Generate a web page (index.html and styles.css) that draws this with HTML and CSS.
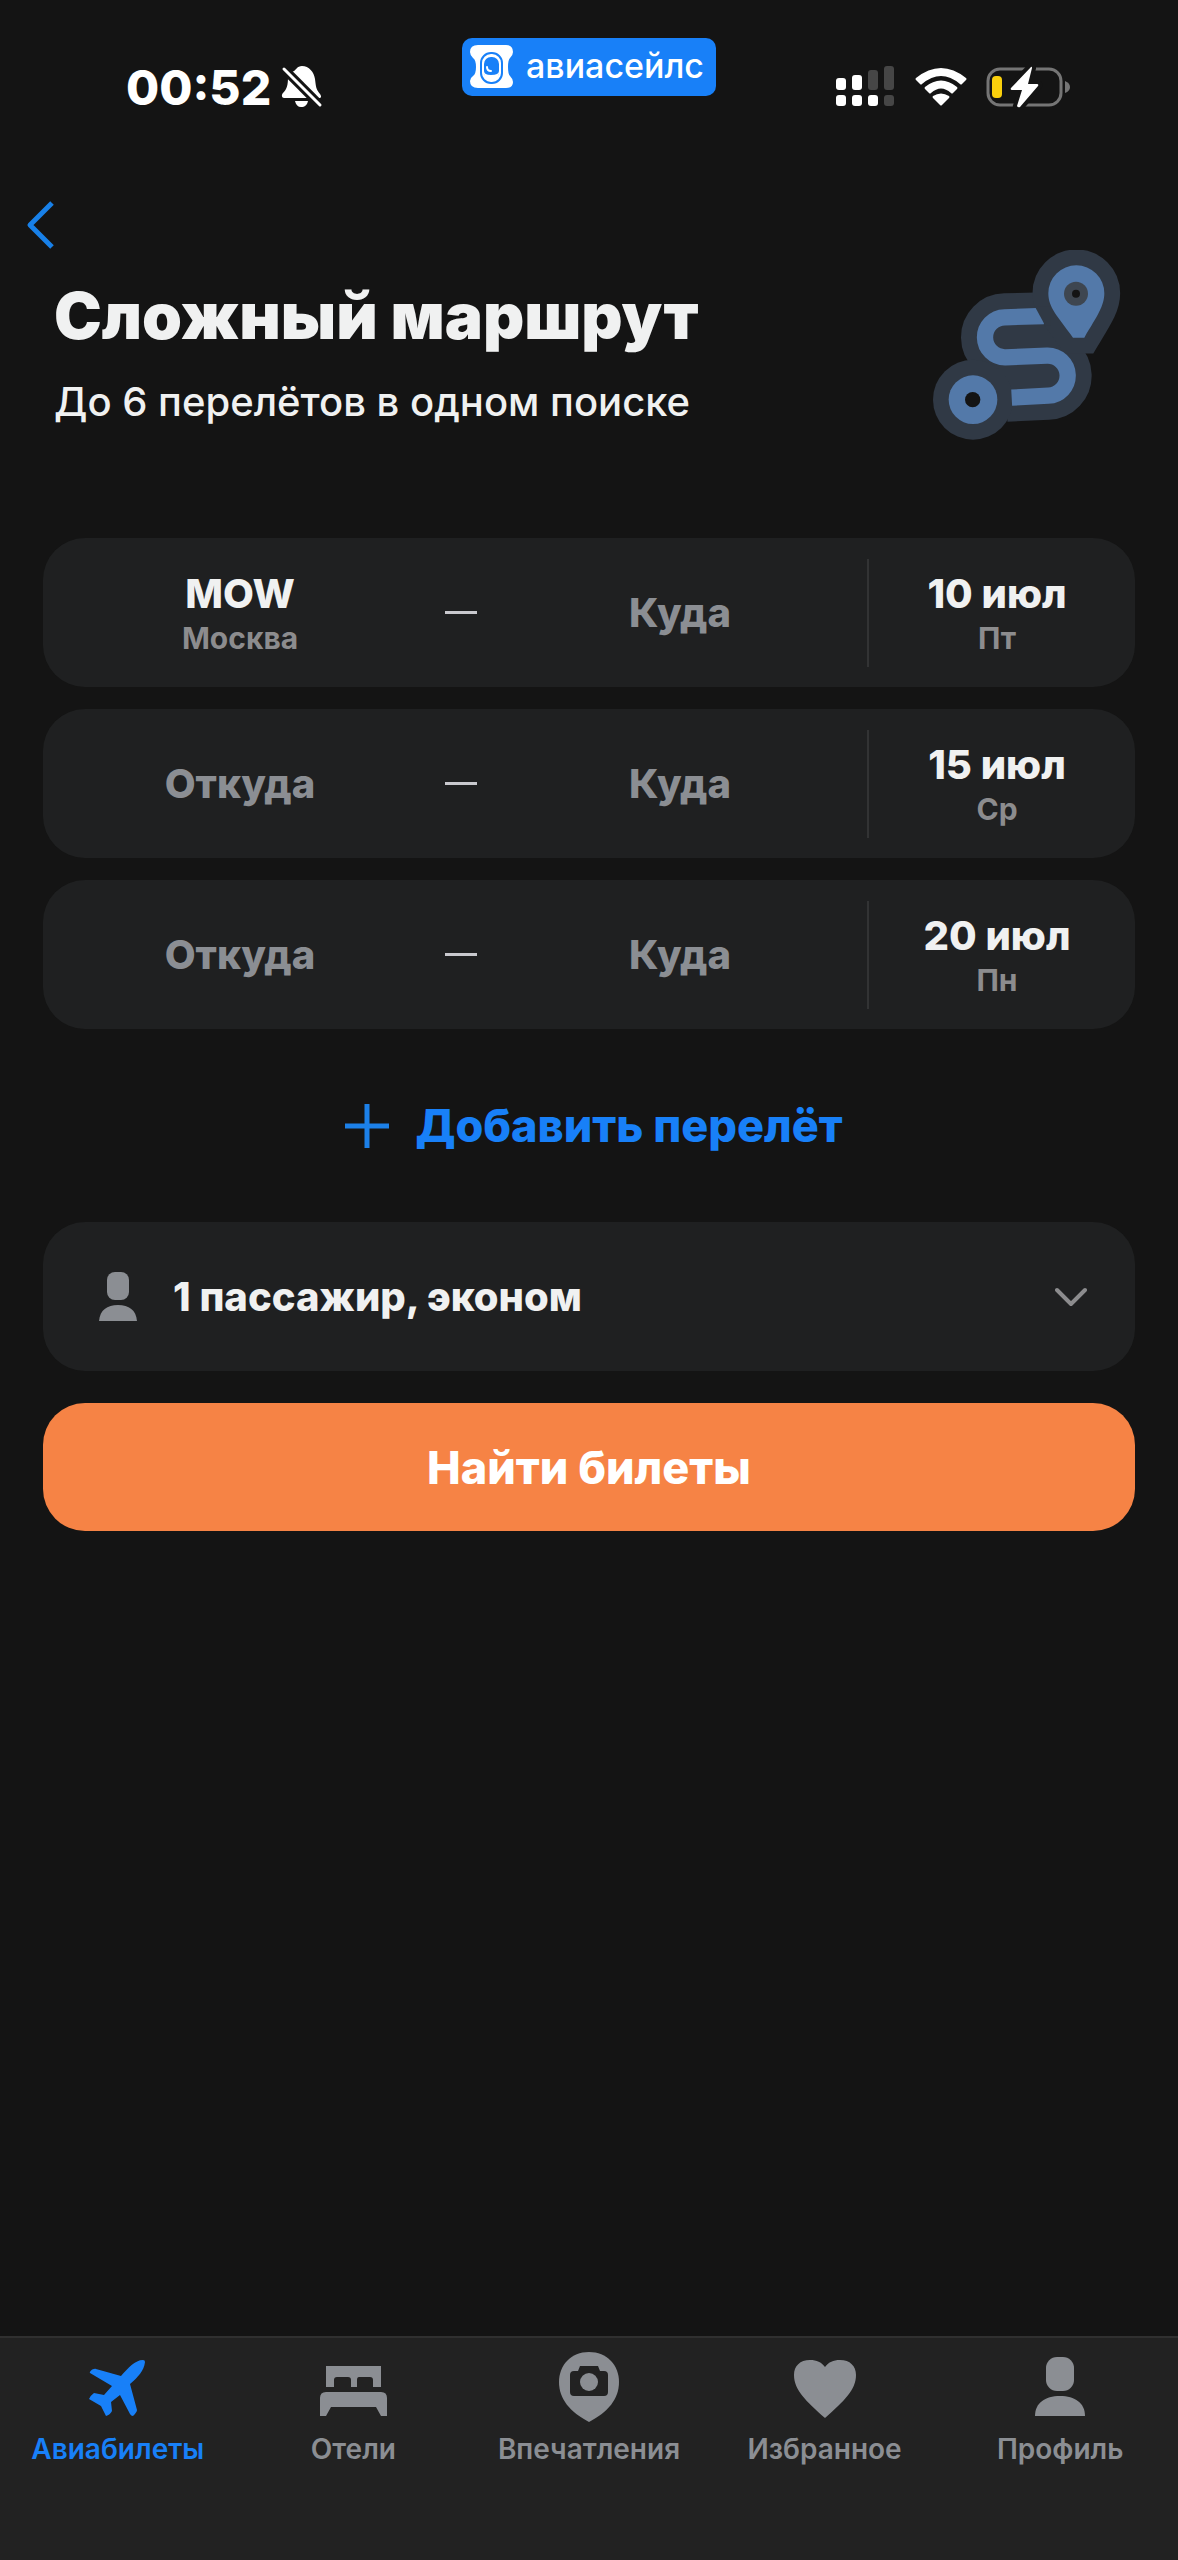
FILE: index.html
```html
<!DOCTYPE html>
<html lang="ru">
<head>
  <meta charset="UTF-8">
  <meta name="viewport" content="width=device-width, initial-scale=1.0">
  <title>Сложный маршрут</title>
  <link rel="stylesheet" href="styles.css">
</head>
<body>
<div class="status-bar">
  <div class="status-left">
    <span class="time">00:52</span>
    <svg width="42" height="44" viewBox="0 0 42 44" fill="#fff">
      <path d="M13 6 C15 5 16 1 21 1 C28 1 33 7 34 14 C35 22 35 24 39 29 C41 32 40 33 38 33 H3 C1 33 0 30 2 28 C6 24 7 20 7 12 C8 9 10 7 13 6 Z"/>
      <path d="M14 36 H27 C26 40 24 42 20 42 C17 42 15 40 14 36 Z"/>
      <path d="M3 4 L39 40" stroke="#141414" stroke-width="9"/>
      <path d="M3 4 L39 40" stroke="#fff" stroke-width="3" stroke-linecap="round"/>
    </svg>
  </div>
  <div class="brand">
    <svg width="44" height="44" viewBox="0 0 44 44">
      <path d="M8 0 H36 Q43 0 43 7 Q43 10 40 13 Q38 15 38 22 Q38 29 40 31 Q43 34 43 37 Q43 43 36 43 H8 Q0 43 0 36 Q0 33 3 31 Q6 29 6 22 Q6 15 3 13 Q0 10 0 7 Q0 0 8 0 Z" fill="#fff"/>
      <rect x="11" y="8" width="21" height="30" rx="10" fill="#fff" stroke="#1880f8" stroke-width="2"/>
      <rect x="14" y="12" width="15" height="22" rx="7" fill="#1880f8"/>
      <path d="M14 26 Q14 30 21 30 Q29 30 29 26 V28 Q29 35 21 35 Q14 35 14 28 Z" fill="#fff"/>
      <path d="M17 22 Q17 26 21 26" fill="none" stroke="#fff" stroke-width="2" stroke-linecap="round"/>
    </svg>
    <span>авиасейлс</span>
  </div>
  <div class="status-right">
    <svg width="60" height="42" viewBox="0 0 60 42" fill="#fff">
      <rect x="0" y="12" width="10" height="12" rx="3"/>
      <rect x="16" y="9" width="10" height="15" rx="3"/>
      <rect x="32" y="4" width="10" height="20" rx="3" fill="#464646"/>
      <rect x="48" y="0" width="10" height="24" rx="3" fill="#464646"/>
      <rect x="0" y="29" width="10" height="11" rx="3"/>
      <rect x="16" y="29" width="10" height="11" rx="3"/>
      <rect x="32" y="29" width="10" height="11" rx="3"/>
      <rect x="48" y="29" width="10" height="11" rx="3" fill="#464646"/>
    </svg>
    <svg width="52" height="38" viewBox="0 0 52 38" fill="#fff">
      <path d="M1 10 Q0 11 1 12 L5 16 Q6 17 7 16 Q26 0 45 16 Q46 17 47 16 L51 12 Q52 11 51 10 Q26 -10 1 10 Z"/>
      <path d="M10 19 Q9 20 10 21 L14 25 Q15 26 16 25 Q26 16 36 25 Q37 26 38 25 L42 21 Q43 20 42 19 Q26 6 10 19 Z"/>
      <path d="M18 28 Q26 23 34 28 Q35 29 34 30 L27 37 Q26 38 25 37 L18 30 Q17 29 18 28 Z"/>
    </svg>
    <svg width="84" height="42" viewBox="0 0 84 42">
      <rect x="2" y="3" width="73" height="36" rx="12" fill="none" stroke="#757575" stroke-width="3"/>
      <path d="M79 15 Q84 17 84 21 Q84 25 79 27 Z" fill="#757575"/>
      <rect x="6" y="10" width="10" height="22" rx="4" fill="#fad00c"/>
      <path d="M45 1 L25 22 Q24 24 26 24 H36 L31 40 Q32 42 34 41 L52 20 Q53 18 51 18 H42 L46 2 Q46 0 45 1 Z" fill="#fff" stroke="#141414" stroke-width="8" paint-order="stroke"/>
    </svg>
  </div>
</div>

<header class="header">
  <a class="back" href="#" aria-label="Назад">
    <svg width="30" height="50" viewBox="0 0 30 50"><path d="M26 3 L4 25 L26 47" fill="none" stroke="#1880e8" stroke-width="5" stroke-linejoin="round"/></svg>
  </a>
  <div class="heading">
    <h1>Сложный маршрут</h1>
    <p>До 6 перелётов в одном поиске</p>
  </div>
  <svg class="route-art" width="190" height="192" viewBox="65 58 570 576" fill="none">
    <g stroke="#303945" fill="#303945">
      <path d="M440 256 L283 260 A60 60 0 0 0 285 380 L410 375 A60 60 0 0 1 414 495 L288 501" stroke-width="144" fill="none"/>
      <path d="M414 188 A84 84 0 0 1 582 188 C582 225 562 255 522 321 H488 C440 255 414 230 414 188 Z" stroke-width="95"/>
      <circle cx="188" cy="507" r="120" stroke="none"/>
    </g>
    <path d="M400 256 L283 260 A60 60 0 0 0 285 380 L410 375 A60 60 0 0 1 414 495 L304 501" stroke="#5379a9" stroke-width="49"/>
    <path d="M374 228 H420 V284 H404 Z" fill="#303945"/>
    <path d="M414 188 A84 84 0 0 1 582 188 C582 225 562 255 522 321 H488 C440 255 414 230 414 188 Z" fill="#5379a9"/>
    <circle cx="497" cy="189" r="36" fill="#3e4650"/>
    <circle cx="497" cy="189" r="12" fill="#141414"/>
    <circle cx="188" cy="507" r="73" fill="#5379a9"/>
    <circle cx="187" cy="507" r="23" fill="#141414"/>
  </svg>
</header>

<main class="container">
  <div class="flight">
    <button class="place"><span>MOW</span><small>Москва</small></button>
    <span class="dash"></span>
    <button class="place to empty">Куда</button>
    <button class="date"><span>10 июл</span><small>Пт</small></button>
  </div>
  <div class="flight">
    <button class="place empty">Откуда</button>
    <span class="dash"></span>
    <button class="place to empty">Куда</button>
    <button class="date"><span>15 июл</span><small>Ср</small></button>
  </div>
  <div class="flight">
    <button class="place empty">Откуда</button>
    <span class="dash"></span>
    <button class="place to empty">Куда</button>
    <button class="date"><span>20 июл</span><small>Пн</small></button>
  </div>

  <button class="add-flight">
    <svg width="44" height="44" viewBox="0 0 44 44"><path d="M22 0 V44 M0 22 H44" stroke="#1c80e8" stroke-width="5"/></svg>
    Добавить перелёт
  </button>

  <button class="passengers">
    <svg width="38" height="50" viewBox="0 0 38 50" fill="#8b8e93">
      <rect x="8" y="0" width="22" height="28" rx="8"/>
      <path d="M0 49 C1 38 8 33 19 33 C30 33 37 38 38 49 Z"/>
    </svg>
    <span>1 пассажир, эконом</span>
    <svg width="32" height="20" viewBox="0 0 32 20"><path d="M2 3 L16 17 L30 3" fill="none" stroke="#8c8c8e" stroke-width="4" stroke-linecap="round" stroke-linejoin="round"/></svg>
  </button>

  <button class="search">Найти билеты</button>
</main>

<nav class="tabs">
  <a class="tab active" href="#">
    <svg width="72" height="72" viewBox="1 0 72 72" fill="currentColor">
      <path d="M9 22 C8 21 12 17 15 18 L40 25 C47 17 54 9 62 9 Q64 9 64 11 C63 20 57 26 49 33 L56 59 Q56 61 52 65 Q50 65 49 63 L39 44 L30 51 L31 60 Q29 64 25 65 L20 55 L8 48 Q10 44 13 42 L23 44 L31 35 Z"/>
    </svg>
    Авиабилеты
  </a>
  <a class="tab" href="#">
    <svg width="72" height="72" viewBox="0 0 72 72" fill="currentColor">
      <path d="M9 15 H64 V36 H56 V29 Q56 26 53 26 H42 Q40 26 40 29 V36 H34 V29 Q34 26 31 26 H20 Q17 26 17 29 V36 H9 Z"/>
      <path d="M9 41 H64 Q70 41 70 47 V65 H64 L59 56 H14 L9 65 H3 V47 Q3 41 9 41 Z"/>
    </svg>
    Отели
  </a>
  <a class="tab" href="#">
    <svg width="72" height="72" viewBox="0 0 72 72" fill="currentColor">
      <path d="M36 1 C54 1 66 14 66 31 C66 48 55 61 36 71 C17 61 6 48 6 31 C6 14 18 1 36 1 Z"/>
      <path d="M27 15 H45 L47 20 H51 Q55 20 55 24 V41 Q55 45 51 45 H21 Q17 45 17 41 V24 Q17 20 21 20 H25 Z" fill="#222"/>
      <circle cx="36" cy="31" r="9"/>
    </svg>
    Впечатления
  </a>
  <a class="tab" href="#">
    <svg width="72" height="72" viewBox="0 0 72 72" fill="currentColor">
      <path d="M36 67 C17 50 5 39 5 24 C5 15 11 9 21 9 C28 9 32 11 36 16 C40 11 44 9 51 9 C61 9 67 15 67 24 C67 39 55 50 36 67 Z"/>
    </svg>
    Избранное
  </a>
  <a class="tab" href="#">
    <svg width="72" height="72" viewBox="0 0 72 72" fill="currentColor">
      <rect x="22" y="6" width="28" height="34" rx="11"/>
      <path d="M11 65 C11 52 21 45 36 45 C51 45 61 52 61 65 Z"/>
    </svg>
    Профиль
  </a>
</nav>
</body>
</html>
```
FILE: styles.css
```css
* {
  box-sizing: border-box;
}

body {
  font-family: Inter, "Liberation Sans", sans-serif;
  background-color: #141414;
  color: #f0f1f1;
  margin: 0;
  min-height: 100vh;
  display: flex;
  flex-direction: column;
}

svg {
  display: block;
  flex-shrink: 0;
}

button {
  font: inherit;
  color: inherit;
  background: none;
  border: 0;
  padding: 0;
  cursor: pointer;
}

.status-bar {
  display: grid;
  grid-template-columns: 1fr auto 1fr;
  height: 136px;
  padding: 38px 108px 0;
}

.status-left, .status-right {
  display: flex;
  align-items: center;
  height: 98px;
}

.status-left {
  padding-left: 18px;
  gap: 10px;
  color: #fff;
}

.status-right {
  justify-content: flex-end;
  gap: 19px;
}

.time {
  font-size: 48px;
  font-weight: 800;
}

.brand {
  display: flex;
  align-items: center;
  gap: 12px;
  height: 58px;
  padding: 0 12px 4px 8px;
  border-radius: 10px;
  background-color: #1880f8;
  color: #fff;
  font-size: 34px;
  font-weight: 500;
}

.brand svg {
  margin-top: 4px;
}

.header {
  display: grid;
  grid-template-columns: 1fr auto;
  padding: 64px 56px 0 26px;
}

.back {
  grid-column: 1 / 3;
  width: 30px;
}

.heading {
  padding: 26px 0 0 28px;
}

h1 {
  font-size: 64px;
  line-height: 80px;
  font-weight: 900;
  margin: 0;
}

.heading p {
  font-size: 40px;
  line-height: 48px;
  font-weight: 500;
  margin: 22px 0 0;
}

.container {
  display: flex;
  flex-direction: column;
  gap: 22px;
  padding: 96px 43px 0;
}

.flight, .passengers {
  min-height: 149px;
  border-radius: 42px;
  background-color: #1f2021;
}

.flight {
  display: grid;
  grid-template-columns: 1fr 44px 1fr 268px;
  align-items: center;
}

.place, .date {
  display: flex;
  flex-direction: column;
  align-items: center;
  justify-content: center;
  height: 108px;
  font-size: 40px;
  line-height: 48px;
  font-weight: 800;
}

.place {
  padding-left: 4px;
}

.place.to {
  padding-left: 16px;
}

.place small, .date small {
  font-size: 30px;
  line-height: 36px;
  font-weight: 700;
  margin-top: 2px;
  color: #8c8c8e;
}

.empty {
  color: #8b8e93;
}

.dash {
  width: 32px;
  height: 3px;
  margin-left: auto;
  background-color: #c9c9ce;
}

.date {
  border-left: 2px solid #323334;
  padding-right: 10px;
}

.add-flight {
  display: flex;
  align-items: center;
  justify-content: center;
  gap: 26px;
  height: 149px;
  padding-left: 10px;
  color: #1880f8;
  font-size: 45px;
  font-weight: 800;
}

.passengers {
  display: flex;
  align-items: center;
  gap: 36px;
  padding: 0 48px 0 56px;
  font-size: 40px;
  font-weight: 800;
}

.passengers span {
  flex: 1;
  text-align: left;
}

.search {
  height: 128px;
  margin-top: 10px;
  border-radius: 42px;
  background-color: #f68345;
  color: #fff;
  font-size: 45px;
  font-weight: 800;
}

.tabs {
  display: flex;
  height: 224px;
  margin-top: auto;
  padding-top: 13px;
  border-top: 2px solid #303030;
  background-color: #222;
}

.tab {
  flex: 1 1 0;
  display: flex;
  flex-direction: column;
  align-items: center;
  gap: 10px;
  color: #8b8e93;
  font-size: 28px;
  line-height: 32px;
  font-weight: 600;
  text-decoration: none;
}

.tab.active {
  color: #1880f8;
}
```
